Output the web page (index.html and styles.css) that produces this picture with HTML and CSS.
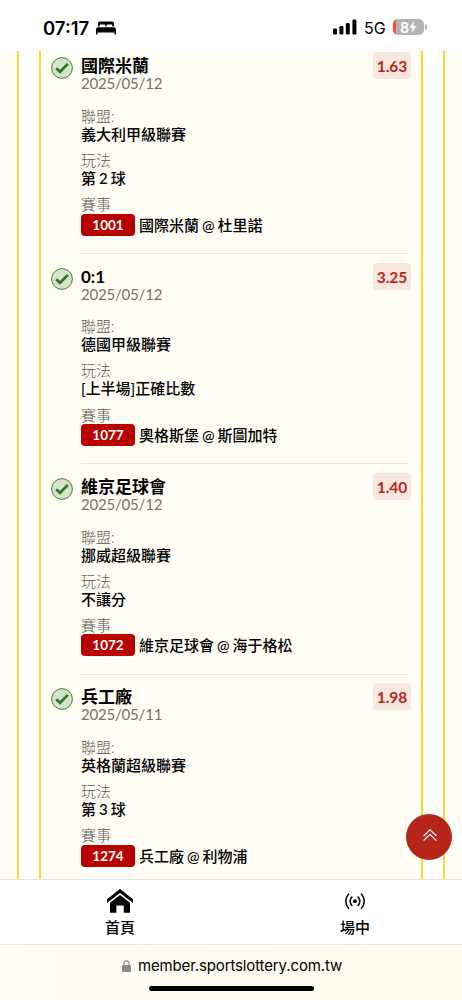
FILE: index.html
```
<!DOCTYPE html>
<html lang="zh-Hant">
<head>
<meta charset="UTF-8">
<meta name="viewport" content="width=device-width, initial-scale=1.0">
<title>member.sportslottery.com.tw</title>
<link rel="stylesheet" href="styles.css">
</head>
<body>
<svg class="defs" width="0" height="0">
<symbol id="check" viewBox="0 0 22 22">
<circle cx="11" cy="11" r="10.4" fill="#d7e2cc" stroke="#3c8530" stroke-width="1"/>
<path d="M5.2 11.2 9.1 14.8 16.8 6.9" fill="none" stroke="#2c7820" stroke-width="2.7"/>
</symbol>
</svg>

<header class="status">
<span class="time">07:17</span>
<svg class="bed" width="20" height="14" viewBox="0 0 20 14">
<path d="M2 5.5V2.6Q2 .6 4 .6H16Q18 .6 18 2.6V5.5H16.4V4.8Q16.4 3.6 15.2 3.6H11.4Q10.6 3.6 10.6 4.4V5.5H9.4V4.4Q9.4 3.6 8.6 3.6H4.8Q3.6 3.6 3.6 4.8V5.5Z"/>
<path d="M2.6 6.2H17.4Q20 6.2 20 8.6V12.6Q20 13.7 19.2 13.7T18.4 12.6V11.5H1.6V12.6Q1.6 13.7.8 13.7T0 12.6V8.6Q0 6.2 2.6 6.2Z"/>
</svg>
<svg class="signal" width="24" height="16" viewBox="0 0 24 16">
<rect x="0" y="9.5" width="4" height="6" rx="1.2"/>
<rect x="6.4" y="7" width="4" height="8.5" rx="1.2"/>
<rect x="12.8" y="4" width="4" height="11.5" rx="1.2"/>
<rect x="19.4" y="0.5" width="4" height="15" rx="1.2"/>
</svg>
<span class="network">5G</span>
<div class="battery"><span>8</span>
<svg width="8" height="12" viewBox="0 0 8 12"><path d="M5.2 0 .4 6.7H3.5L2.6 12 7.6 5H4.4Z"/></svg>
</div>
</header>

<main>
<div class="outer">
<div class="slip">

<article class="bet">
<svg class="check"><use href="#check"/></svg>
<div class="info">
<h2>國際米蘭</h2>
<time>2025/05/12</time>
<dl>
<dt>聯盟:</dt><dd>義大利甲級聯賽</dd>
<dt>玩法</dt><dd>第 2 球</dd>
<dt>賽事</dt><dd class="match"><b>1001</b>國際米蘭 @ 杜里諾</dd>
</dl>
</div>
<span class="odds">1.63</span>
</article>

<article class="bet">
<svg class="check"><use href="#check"/></svg>
<div class="info">
<h2>0:1</h2>
<time>2025/05/12</time>
<dl>
<dt>聯盟:</dt><dd>德國甲級聯賽</dd>
<dt>玩法</dt><dd>[上半場]正確比數</dd>
<dt>賽事</dt><dd class="match"><b>1077</b>奧格斯堡 @ 斯圖加特</dd>
</dl>
</div>
<span class="odds">3.25</span>
</article>

<article class="bet">
<svg class="check"><use href="#check"/></svg>
<div class="info">
<h2>維京足球會</h2>
<time>2025/05/12</time>
<dl>
<dt>聯盟:</dt><dd>挪威超級聯賽</dd>
<dt>玩法</dt><dd>不讓分</dd>
<dt>賽事</dt><dd class="match"><b>1072</b>維京足球會 @ 海于格松</dd>
</dl>
</div>
<span class="odds">1.40</span>
</article>

<article class="bet">
<svg class="check"><use href="#check"/></svg>
<div class="info">
<h2>兵工廠</h2>
<time>2025/05/11</time>
<dl>
<dt>聯盟:</dt><dd>英格蘭超級聯賽</dd>
<dt>玩法</dt><dd>第 3 球</dd>
<dt>賽事</dt><dd class="match"><b>1274</b>兵工廠 @ 利物浦</dd>
</dl>
</div>
<span class="odds">1.98</span>
</article>

</div>
</div>
<button class="to-top" aria-label="Top">
<svg width="14" height="12" viewBox="0 0 14 12"><path d="M.6 7 7 .8 13.4 7M.6 11.5 7 5.3 13.4 11.5"/></svg>
</button>
</main>

<nav class="tabs">
<a class="tab">
<svg width="28" height="26" viewBox="0 0 28 26">
<path d="M14 1 27 11.3V15L14 4.9 1 15V11.3Z"/>
<path d="M14 7 24 14.8V24.7H17.8V17.5H10.4V24.7H4V14.8Z"/>
</svg>
<span>首頁</span>
</a>
<a class="tab">
<svg width="28" height="26" viewBox="0 0 28 26">
<circle cx="14" cy="13.2" r="1.9"/>
<path class="wave" d="M10.9 9Q7.4 13.2 10.9 17.4M17.1 9Q20.6 13.2 17.1 17.4M7.6 6Q1.8 13.2 7.6 20.4M20.4 6Q26.2 13.2 20.4 20.4"/>
</svg>
<span>場中</span>
</a>
</nav>

<footer class="browser">
<div class="address">
<svg width="9" height="12" viewBox="0 0 9 12"><rect y="5" width="9" height="7" rx="1.3"/><path d="M2 5.5V3.3a2.5 2.5 0 0 1 5 0V5.5" fill="none" stroke="#8b8b89" stroke-width="1.2"/></svg>
<span>member.sportslottery.com.tw</span>
</div>
<div class="home-bar"></div>
</footer>
</body>
</html>
```
FILE: styles.css
```
* {
margin: 0;
padding: 0;
box-sizing: border-box;
}

body {
width: 462px;
height: 1000px;
display: flex;
flex-direction: column;
overflow: hidden;
background: #fff;
color: #000;
font-family: Lato, "Noto Sans CJK TC", sans-serif;
}

svg {
display: block;
flex: none;
}

.defs {
position: absolute;
}

/* status bar */
.status {
height: 51px;
flex: none;
display: flex;
align-items: center;
padding: 5px 38px 0 43px;
font-family: Inter, sans-serif;
}

.time {
width: 48px;
font-size: 18.5px;
font-weight: 600;
}

.bed {
margin-left: 5px;
}

.signal {
margin-left: auto;
margin-top: -2px;
}

.network {
margin-left: 7px;
width: 22px;
font-size: 16px;
}

.battery {
position: relative;
display: flex;
align-items: center;
justify-content: center;
width: 31px;
height: 16px;
margin-left: 7px;
margin-top: -2px;
border-radius: 5px;
background: linear-gradient(90deg, #fc4b41 3px, #b4b4b4 3px);
color: #fff;
font-size: 14px;
font-weight: 700;
}

.battery svg {
fill: #fff;
}

.battery::after {
content: "";
position: absolute;
right: -3px;
top: 5px;
width: 2px;
height: 6px;
border-radius: 0 2px 2px 0;
background: #b4b4b4;
}

/* bet list */
main {
position: relative;
flex: 1;
min-height: 0;
overflow: hidden;
background: #fffdf4;
}

.outer {
width: 428px;
margin-left: 17px;
padding: 0 20px;
border: solid #fdd835;
border-width: 0 2px;
background: #fff;
}

.slip {
height: 828px;
padding: 0 12px 0 10px;
border: solid #fdd835;
border-width: 0 2px;
background: #fffdf4;
overflow: hidden;
}

.bet {
position: relative;
display: flex;
height: 210.33px;
padding-top: 13px;
}

.bet:first-child {
margin-top: -7.7px;
}

.bet:not(:last-child)::after {
content: "";
position: absolute;
left: 30px;
right: 0;
bottom: -0.5px;
height: 1px;
background: #e8e4df;
}

.check {
width: 22px;
height: 22px;
margin-top: 1px;
margin-right: 8px;
}

.info {
flex: 1;
}

h2 {
height: 19px;
font-size: 17px;
line-height: 19px;
font-weight: 700;
}

time {
display: block;
font-size: 15px;
line-height: 17px;
letter-spacing: -0.2px;
color: #737370;
}

dl {
margin-top: 14.6px;
font-size: 15px;
line-height: 18px;
}

dt {
height: 18px;
color: #5c5c59;
font-weight: 300;
}

dd {
height: 18px;
margin-bottom: 8.2px;
font-weight: 500;
white-space: nowrap;
word-spacing: -0.8px;
}

.match {
display: flex;
align-items: center;
height: 23px;
}

.match b {
width: 54px;
height: 22px;
margin-right: 4px;
border-radius: 4px;
background: #b90000;
color: #fff;
font-size: 13.5px;
line-height: 22px;
font-weight: 700;
text-align: center;
}

.odds {
width: 38px;
height: 27px;
margin: -4px -2px 0 0;
border-radius: 4px;
background: #f8e6df;
color: #b9281c;
font-size: 15.5px;
line-height: 28px;
font-weight: 700;
text-align: center;
}

.to-top {
position: absolute;
left: 406px;
bottom: 19px;
width: 46px;
height: 46px;
display: flex;
align-items: center;
justify-content: center;
padding: 0 0 4px 1px;
border: none;
border-radius: 50%;
background: #b7261b;
}

.to-top path {
fill: none;
stroke: #fff;
stroke-width: 1.1;
}

/* tab bar */
.tabs {
height: 66px;
flex: none;
display: flex;
margin-bottom: -1px;
border-top: 1px solid #e3e3e1;
border-bottom: 1px solid #e9e8e2;
background: #fff;
}

.tab {
width: 235px;
flex: none;
display: flex;
flex-direction: column;
align-items: center;
padding: 8px 0 0 5px;
font-size: 15px;
line-height: 20px;
font-weight: 500;
}

.tab span {
margin-top: 3px;
}

.wave {
fill: none;
stroke: #000;
stroke-width: 1.5;
stroke-linecap: round;
}

/* browser bar */
.browser {
height: 56px;
flex: none;
background: linear-gradient(90deg, #fffdf4, #fefaf2 50%, #fffcf0);
background-clip: content-box;
padding-top: 1px;
}

.address {
display: flex;
align-items: center;
justify-content: center;
gap: 7px;
height: 41px;
padding-left: 2px;
font-family: Inter, sans-serif;
font-size: 15px;
letter-spacing: -0.13px;
}

.address svg {
fill: #8b8b89;
}

.home-bar {
width: 165px;
height: 5px;
margin: 0 auto;
border-radius: 3px;
background: #000;
}
```
